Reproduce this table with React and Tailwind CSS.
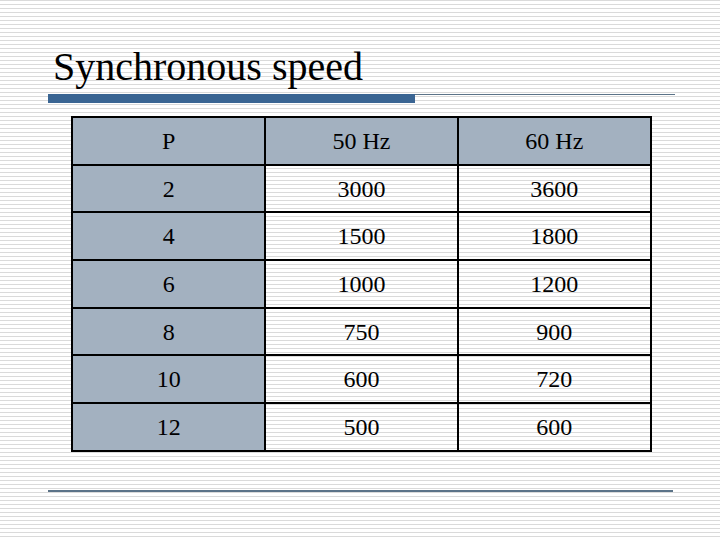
import React from "react";

const rows = [
  ["2", "3000", "3600"],
  ["4", "1500", "1800"],
  ["6", "1000", "1200"],
  ["8", "750", "900"],
  ["10", "600", "720"],
  ["12", "500", "600"],
];

const App = () => {
  return (
    <div
      className="w-[720px] h-[540px] overflow-hidden bg-[repeating-linear-gradient(to_bottom,#dadada_0px,#dadada_1px,#ffffff_1px,#ffffff_4px)] text-black"
      style={{ fontFamily: '"Liberation Serif", "Times New Roman", serif' }}
    >
      <div className="pl-[53px] pt-[45px] text-[40px] leading-[44px]">Synchronous speed</div>
      <div className="flex items-start ml-[48px] mt-[5px]">
        <div className="w-[367px] h-[9px] bg-[#3a6593]" />
        <div className="w-[260px] h-px bg-[#5b7388]" />
      </div>
      <table className="ml-[71px] mt-[13px] w-[581px] border-collapse text-[24px] text-center">
        <thead>
          <tr className="bg-[#a3b1c0]">
            <td className="h-[47.7px] w-[194px] border-2 border-black">P</td>
            <td className="h-[47.7px] w-[193px] border-2 border-black">50 Hz</td>
            <td className="h-[47.7px] w-[194px] border-2 border-black">60 Hz</td>
          </tr>
        </thead>
        <tbody>
          {rows.map((r) => (
            <tr key={r[0]}>
              <td className="h-[47.7px] border-2 border-black bg-[#a3b1c0]">{r[0]}</td>
              <td className="h-[47.7px] border-2 border-black">{r[1]}</td>
              <td className="h-[47.7px] border-2 border-black">{r[2]}</td>
            </tr>
          ))}
        </tbody>
      </table>
      <div className="ml-[48px] mt-[38px] w-[625px] h-[2px] bg-[#5b7388]" />
    </div>
  );
};

export default App;
